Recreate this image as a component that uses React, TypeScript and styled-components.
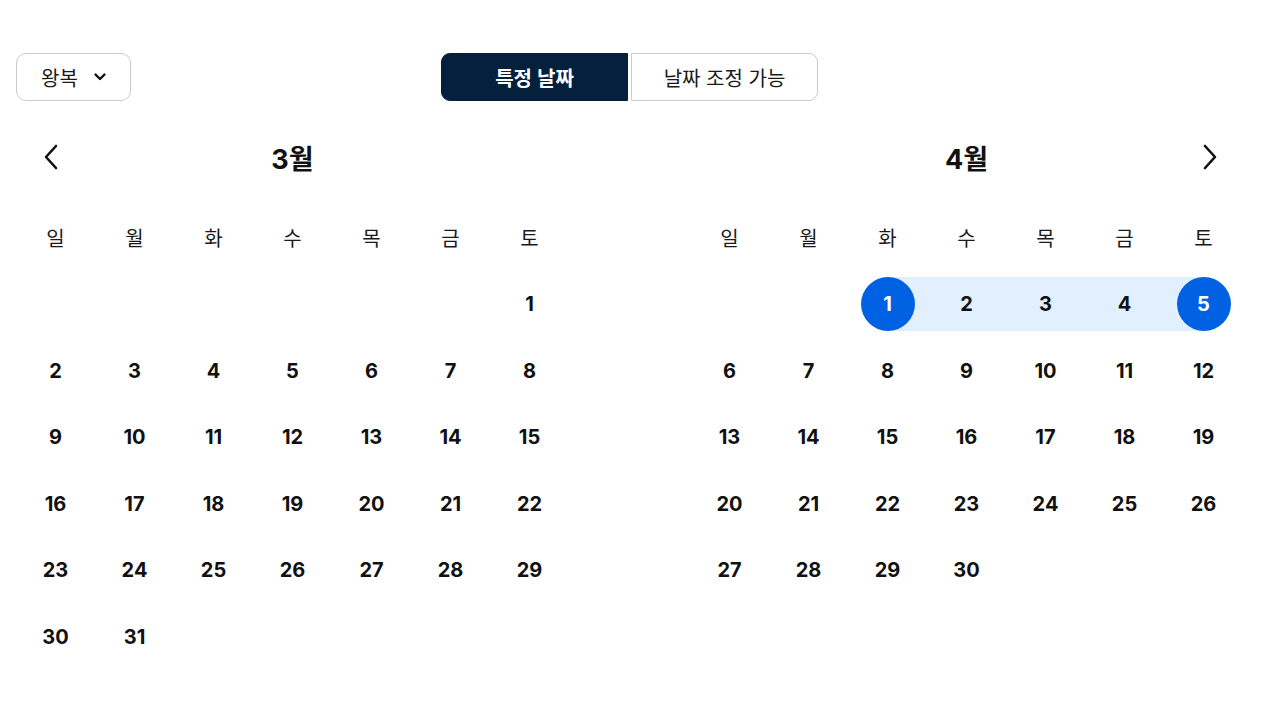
import React, { useState } from 'react';
import styled, { createGlobalStyle, css } from 'styled-components';

const GlobalStyle = createGlobalStyle`
  * { box-sizing: border-box; }
  body {
    margin: 0;
    background: #ffffff;
    color: #111111;
    font-family: Inter, "Noto Sans CJK KR", "Noto Sans", sans-serif;
  }
`;

const Page = styled.div`
  width: 1227px;
  margin-left: 16px;
  padding-top: 53px;
`;

const TopBar = styled.div`
  display: grid;
  grid-template-columns: 1fr auto 1fr;
  align-items: center;
`;

const TripSelect = styled.button`
  justify-self: start;
  display: flex;
  align-items: center;
  gap: 15px;
  width: 115px;
  height: 48px;
  padding: 0 0 0 24px;
  border: 1px solid #c9ccd3;
  border-radius: 10px;
  background: #ffffff;
  font-family: inherit;
  font-size: 20px;
  color: #1a1a1a;
  cursor: pointer;
`;

const Segmented = styled.div`
  display: flex;
  gap: 3px;
`;

interface ISegment {
  active: boolean;
  side: 'left' | 'right';
}

const Segment = styled.button<ISegment>`
  width: 187px;
  height: 48px;
  font-family: inherit;
  font-size: 20px;
  cursor: pointer;
  border: 1px solid ${(props) => (props.active ? '#04203d' : '#c9ccd3')};
  background: ${(props) => (props.active ? '#04203d' : '#ffffff')};
  color: ${(props) => (props.active ? '#ffffff' : '#1a1a1a')};
  font-weight: ${(props) => (props.active ? 600 : 400)};
  border-radius: ${(props) =>
    props.side === 'left' ? '9px 0 0 9px' : '0 9px 9px 0'};
`;

const Calendars = styled.div`
  display: flex;
  justify-content: space-between;
  margin-top: 32px;
`;

const Month = styled.div`
  width: 553px;
`;

const MonthHeader = styled.div`
  position: relative;
  height: 48px;
  display: flex;
  align-items: center;
  justify-content: center;
`;

const MonthTitle = styled.h2`
  margin: 0;
  font-size: 27px;
  font-weight: 700;
  color: #111111;
`;

interface INavBtn {
  side: 'left' | 'right';
}

const NavBtn = styled.button<INavBtn>`
  position: absolute;
  top: 50%;
  transform: translateY(-50%);
  ${(props) => (props.side === 'left' ? 'left: 21px;' : 'right: 19px;')}
  width: 28px;
  height: 36px;
  display: flex;
  align-items: center;
  justify-content: center;
  padding: 0;
  border: none;
  background: none;
  cursor: pointer;
  color: #111111;
`;

const WeekRow = styled.div`
  display: grid;
  grid-template-columns: repeat(7, 79px);
  height: 40px;
  margin-top: 36px;
  align-items: center;
`;

const WeekDay = styled.span`
  text-align: center;
  font-size: 20px;
  color: #1a1a1a;
`;

const DayGrid = styled.div`
  display: grid;
  grid-template-columns: repeat(7, 79px);
  grid-auto-rows: 66.5px;
  margin-top: 14px;
`;

type RangePos = 'none' | 'start' | 'middle' | 'end';

interface IDayCell {
  range: RangePos;
}

const DayCell = styled.div<IDayCell>`
  position: relative;
  display: flex;
  align-items: center;
  justify-content: center;

  &::before {
    content: '';
    position: absolute;
    top: 6.25px;
    height: 54px;
    background: #e2efff;
    display: ${(props) => (props.range === 'none' ? 'none' : 'block')};
    left: ${(props) => (props.range === 'start' ? '50%' : '0')};
    right: ${(props) => (props.range === 'end' ? '50%' : '0')};
  }
`;

interface IDayNum {
  selected: boolean;
}

const DayNum = styled.span<IDayNum>`
  position: relative;
  width: 54px;
  height: 54px;
  border-radius: 50%;
  display: flex;
  align-items: center;
  justify-content: center;
  font-size: 20px;
  font-weight: 700;
  color: #111111;
  ${(props) =>
    props.selected &&
    css`
      background: #0062e3;
      color: #ffffff;
    `}
`;

const WEEKDAYS = ['일', '월', '화', '수', '목', '금', '토'];

interface IMonthData {
  title: string;
  offset: number;
  days: number;
  nav?: 'left' | 'right';
  range?: [number, number];
}

const MONTHS: IMonthData[] = [
  { title: '3월', offset: 6, days: 31, nav: 'left' },
  { title: '4월', offset: 2, days: 30, nav: 'right', range: [1, 5] },
];

function Chevron({ side }: { side: 'left' | 'right' }) {
  return (
    <svg width="16" height="26" viewBox="0 0 16 26" fill="none">
      <path
        d={side === 'left' ? 'M13 2 L3 13 L13 24' : 'M3 2 L13 13 L3 24'}
        stroke="currentColor"
        strokeWidth="2.6"
        strokeLinecap="round"
        strokeLinejoin="round"
      />
    </svg>
  );
}

function rangePos(day: number, range?: [number, number]): RangePos {
  if (!range || range[0] === range[1]) return 'none';
  if (day === range[0]) return 'start';
  if (day === range[1]) return 'end';
  if (day > range[0] && day < range[1]) return 'middle';
  return 'none';
}

function MonthView({ month }: { month: IMonthData }) {
  const cells: (number | null)[] = [
    ...Array(month.offset).fill(null),
    ...Array.from({ length: month.days }, (_, i) => i + 1),
  ];

  return (
    <Month>
      <MonthHeader>
        {month.nav && (
          <NavBtn side={month.nav} aria-label={month.nav === 'left' ? '이전 달' : '다음 달'}>
            <Chevron side={month.nav} />
          </NavBtn>
        )}
        <MonthTitle>{month.title}</MonthTitle>
      </MonthHeader>
      <WeekRow>
        {WEEKDAYS.map((w) => (
          <WeekDay key={w}>{w}</WeekDay>
        ))}
      </WeekRow>
      <DayGrid>
        {cells.map((d, i) => {
          if (d === null) return <DayCell key={`empty${i}`} range="none" />;
          const selected =
            !!month.range && (d === month.range[0] || d === month.range[1]);
          return (
            <DayCell key={`day${d}`} range={rangePos(d, month.range)}>
              <DayNum selected={selected}>{d}</DayNum>
            </DayCell>
          );
        })}
      </DayGrid>
    </Month>
  );
}

function App() {
  const [mode, setMode] = useState<'fixed' | 'flex'>('fixed');

  return (
    <>
      <GlobalStyle />
      <Page>
        <TopBar>
          <TripSelect>
            왕복
            <svg width="14" height="14" viewBox="0 0 14 14" fill="none">
              <path
                d="M2.5 4.5 L7 9 L11.5 4.5"
                stroke="#111"
                strokeWidth="2.4"
                strokeLinecap="round"
                strokeLinejoin="round"
              />
            </svg>
          </TripSelect>
          <Segmented>
            <Segment
              side="left"
              active={mode === 'fixed'}
              onClick={() => setMode('fixed')}
            >
              특정 날짜
            </Segment>
            <Segment
              side="right"
              active={mode === 'flex'}
              onClick={() => setMode('flex')}
            >
              날짜 조정 가능
            </Segment>
          </Segmented>
          <div />
        </TopBar>
        <Calendars>
          {MONTHS.map((m) => (
            <MonthView key={m.title} month={m} />
          ))}
        </Calendars>
      </Page>
    </>
  );
}

export default App;
